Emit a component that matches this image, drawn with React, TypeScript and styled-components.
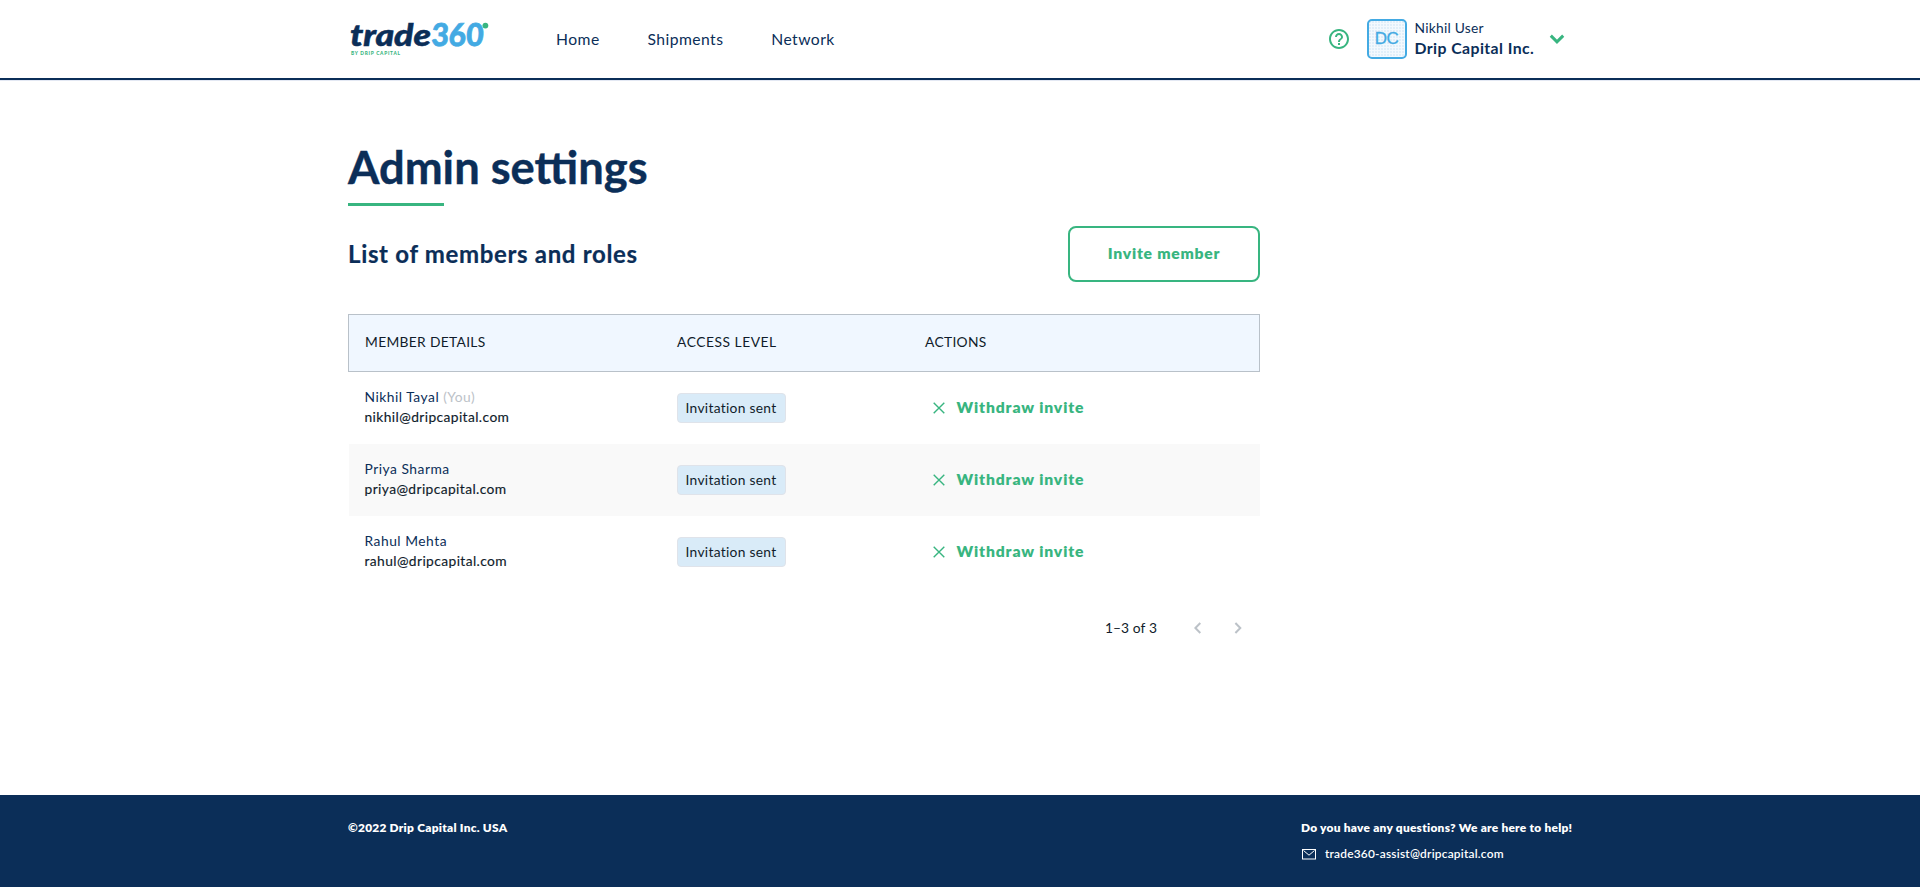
import React from 'react';
import styled, { createGlobalStyle } from 'styled-components';

const navy = '#0b2e58';
const green = '#38b580';
const blue = '#43aae3';
const ink = '#101c2b';
const muted = '#bcc2c8';

const GlobalStyle = createGlobalStyle`
  *, *::before, *::after { box-sizing: border-box; }
  body {
    margin: 0;
    background: #fff;
    color: ${navy};
    font-family: Lato, "Open Sans", sans-serif;
    overflow: hidden;
  }
  h1, h2, p { margin: 0; }
`;

const Page = styled.div`
  display: flex;
  flex-direction: column;
  height: 100vh;
`;

const Header = styled.header`
  flex: none;
  height: 80px;
  border-bottom: 2px solid ${navy};
  box-shadow: 0 1px 0 #e3e8f3;
`;

const Container = styled.div`
  width: 1224px;
  height: 100%;
  margin: 0 auto;
  display: flex;
`;

const HeaderInner = styled(Container)`
  align-items: center;
`;

const Logo = styled.svg`
  display: block;
  width: 144px;
  height: 56px;
  flex: none;
  overflow: visible;
`;

const Nav = styled.nav`
  display: flex;
  gap: 47.8px;
  margin-left: 64px;
`;

const NavLink = styled.a`
  font-size: 15.7px;
  line-height: 24px;
  letter-spacing: 0.45px;
  color: ${navy};
`;

const Account = styled.div`
  display: flex;
  align-items: center;
  margin-left: auto;
  padding-right: 7px;
`;

const HelpIcon = styled.svg`
  display: block;
  width: 24px;
  height: 24px;
  margin-right: 16px;
`;

const Avatar = styled.div`
  width: 40px;
  height: 40px;
  border: 2px solid ${blue};
  border-radius: 5px;
  background-color: #f3f9fe;
  background-image: radial-gradient(circle at 1px 1px, #e0eef9 0.7px, transparent 0.9px);
  background-size: 3px 3px;
  display: flex;
  align-items: center;
  justify-content: center;
  padding: 0 1px 1px 0;
  color: ${blue};
  font: 400 17px/20px "Liberation Sans", Arial, sans-serif;
  letter-spacing: -0.5px;
  -webkit-text-stroke: 0.3px ${blue};
`;

const UserText = styled.div`
  width: 126px;
  margin: 0 0 2px 7.5px;
  white-space: nowrap;
`;

const UserName = styled.div`
  font-size: 13.8px;
  line-height: 20px;
  letter-spacing: 0.24px;
`;

const Company = styled.div`
  font-size: 15.8px;
  font-weight: 700;
  line-height: 20px;
  letter-spacing: 0.42px;
`;

const ChevronDown = styled.svg`
  display: block;
  width: 16px;
  height: 12px;
  margin-left: 8.5px;
`;

const Main = styled.main`
  flex: 1;
  width: 1224px;
  margin: 0 auto;
  padding-top: 48px;
`;

const Content = styled.section`
  width: 912px;
`;

const Title = styled.h1`
  padding-top: 2px;
  font-size: 45.3px;
  font-weight: 700;
  line-height: 73px;
  -webkit-text-stroke: 0.4px ${navy};
  &::after {
    content: '';
    display: block;
    width: 96px;
    height: 3px;
    background: ${green};
  }
`;

const SectionHead = styled.div`
  display: flex;
  align-items: center;
  justify-content: space-between;
  margin-top: 20px;
`;

const SectionTitle = styled.h2`
  font-size: 24px;
  font-weight: 700;
  line-height: 32px;
  letter-spacing: 0.67px;
  -webkit-text-stroke: 0.2px ${navy};
`;

const InviteButton = styled.button`
  width: 192px;
  height: 56px;
  padding: 0 0 2px;
  border: 2px solid ${green};
  border-radius: 8px;
  background: #fff;
  color: ${green};
  font: 800 15.7px/24px Lato, sans-serif;
  letter-spacing: 0.74px;
`;

const TableHead = styled.div`
  display: grid;
  grid-template-columns: 312px 248px 1fr;
  align-items: center;
  height: 58px;
  margin-top: 32px;
  padding: 0 16px 2px;
  border: 1px solid #b9c1c9;
  background: #f0f7ff;
  color: ${ink};
  font-size: 13.8px;
  line-height: 20px;
`;

const HeadCell = styled.span<{ $tracking: number }>`
  letter-spacing: ${(p) => p.$tracking}px;
`;

const TableRow = styled.div`
  display: grid;
  grid-template-columns: 312px 251px 1fr;
  align-items: center;
  height: 72px;
  margin-left: 1px;
  padding: 0 16px;
  &:nth-child(odd) { background: #f9f9f9; }
`;

const Member = styled.div`
  padding-bottom: 2px;
  line-height: 20px;
  margin-left: -0.5px;
`;

const MemberName = styled.div`
  font-size: 13.8px;
  letter-spacing: 0.52px;
`;

const You = styled.span`
  color: ${muted};
  letter-spacing: 0.4px;
`;

const MemberEmail = styled.div`
  color: ${ink};
  font-size: 13.8px;
  letter-spacing: 0.4px;
  -webkit-text-stroke: 0.15px ${ink};
`;

const Badge = styled.span`
  display: inline-flex;
  align-items: center;
  width: 109px;
  height: 30px;
  padding: 0 0 2px 7.5px;
  border: 1px solid #dfe3ea;
  border-radius: 4px;
  background: #d9ebf8;
  color: ${ink};
  font-size: 13.8px;
  letter-spacing: 0.29px;
  white-space: nowrap;
`;

const WithdrawButton = styled.button`
  display: flex;
  align-items: center;
  gap: 11.5px;
  padding: 0 0 0 5px;
  border: 0;
  background: none;
  color: ${green};
  font: 800 15.7px/24px Lato, sans-serif;
  letter-spacing: 0.87px;
`;

const WithdrawText = styled.span`
  padding-bottom: 2px;
`;

const CrossIcon = styled.svg`
  display: block;
  width: 12px;
  height: 12px;
`;

const Pager = styled.div`
  display: flex;
  align-items: center;
  justify-content: flex-end;
  gap: 28px;
  height: 40px;
  margin-top: 20px;
  padding-right: 16px;
  color: ${ink};
  font-size: 13.8px;
`;

const PageCount = styled.span`
  margin-right: 7px;
  padding-bottom: 2px;
  letter-spacing: 0.1px;
`;

const PageArrow = styled.svg`
  display: block;
  width: 12px;
  height: 12px;
  margin-bottom: 1px;
`;

const Footer = styled.footer`
  flex: none;
  height: 92px;
  background: ${navy};
  color: #fff;
  font-size: 11.9px;
  line-height: 16px;
`;

const FooterInner = styled(Container)`
  justify-content: space-between;
  padding-top: 25px;
`;

const FooterStrong = styled.p`
  font-weight: 800;
  letter-spacing: 0.26px;
`;

const Contact = styled.div`
  width: 271px;
  white-space: nowrap;
`;

const MailLine = styled.div`
  display: flex;
  align-items: center;
  gap: 9px;
  margin-top: 10px;
  font-weight: 600;
  letter-spacing: 0.22px;
`;

const MailIcon = styled.svg`
  display: block;
  width: 14px;
  height: 11px;
  margin: 1px 0 0 1px;
`;

const members = [
  { name: 'Nikhil Tayal', email: 'nikhil@dripcapital.com', you: true },
  { name: 'Priya Sharma', email: 'priya@dripcapital.com', you: false },
  { name: 'Rahul Mehta', email: 'rahul@dripcapital.com', you: false },
];

function Trade360Logo() {
  return (
    <Logo viewBox="0 0 144 56">
      <g fontFamily="Lato, sans-serif" fontWeight="900">
        <text x="2" y="35" fontSize="30" fontStyle="italic" fill={navy} stroke={navy} strokeWidth=".5" textLength="81" lengthAdjust="spacingAndGlyphs">trade</text>
        <text transform="translate(83 35.4) skewX(-3)" fontSize="31.5" fill={blue} stroke={blue} strokeWidth=".7" textLength="52" lengthAdjust="spacingAndGlyphs">360</text>
        <text x="3" y="43.8" fontSize="4.8" fill={green} textLength="49" lengthAdjust="spacing">BY DRIP CAPITAL</text>
      </g>
      <circle cx="137.4" cy="14.6" r="2.9" fill={green} />
    </Logo>
  );
}

export default function App() {
  return (
    <Page>
      <GlobalStyle />
      <Header>
        <HeaderInner>
          <Trade360Logo />
          <Nav>
            <NavLink>Home</NavLink>
            <NavLink>Shipments</NavLink>
            <NavLink>Network</NavLink>
          </Nav>
          <Account>
            <HelpIcon viewBox="0 0 24 24" fill={green}>
              <path d="M11 18h2v-2h-2v2zm1-16C6.48 2 2 6.48 2 12s4.48 10 10 10 10-4.48 10-10S17.52 2 12 2zm0 18c-4.41 0-8-3.59-8-8s3.59-8 8-8 8 3.59 8 8-3.59 8-8 8zm0-14c-2.21 0-4 1.79-4 4h2c0-1.1.9-2 2-2s2 .9 2 2c0 2-3 1.75-3 5h2c0-2.25 3-2.5 3-5 0-2.21-1.79-4-4-4z" />
            </HelpIcon>
            <Avatar>DC</Avatar>
            <UserText>
              <UserName>Nikhil User</UserName>
              <Company>Drip Capital Inc.</Company>
            </UserText>
            <ChevronDown viewBox="0 0 16 12" fill="none" stroke={green} strokeWidth="3">
              <path d="M1.8 2.6 8 8.8l6.2-6.2" />
            </ChevronDown>
          </Account>
        </HeaderInner>
      </Header>
      <Main>
        <Content>
          <Title>Admin settings</Title>
          <SectionHead>
            <SectionTitle>List of members and roles</SectionTitle>
            <InviteButton>Invite member</InviteButton>
          </SectionHead>
          <div>
            <TableHead>
              <HeadCell $tracking={0.32}>MEMBER DETAILS</HeadCell>
              <HeadCell $tracking={0.54}>ACCESS LEVEL</HeadCell>
              <HeadCell $tracking={0.32}>ACTIONS</HeadCell>
            </TableHead>
            {members.map((m) => (
              <TableRow key={m.email}>
                <Member>
                  <MemberName>
                    {m.name}
                    {m.you && <You> (You)</You>}
                  </MemberName>
                  <MemberEmail>{m.email}</MemberEmail>
                </Member>
                <div>
                  <Badge>Invitation sent</Badge>
                </div>
                <WithdrawButton>
                  <CrossIcon viewBox="0 0 12 12" stroke={green} strokeWidth="1.4">
                    <path d="M.7.7l10.6 10.6M11.3.7.7 11.3" />
                  </CrossIcon>
                  <WithdrawText>Withdraw invite</WithdrawText>
                </WithdrawButton>
              </TableRow>
            ))}
          </div>
          <Pager>
            <PageCount>1–3 of 3</PageCount>
            <PageArrow viewBox="0 0 12 12" fill="none" stroke={muted} strokeWidth="2">
              <path d="M8.3 1 3.4 6l4.9 5" />
            </PageArrow>
            <PageArrow viewBox="0 0 12 12" fill="none" stroke={muted} strokeWidth="2">
              <path d="M3.4 1l4.9 5-4.9 5" />
            </PageArrow>
          </Pager>
        </Content>
      </Main>
      <Footer>
        <FooterInner>
          <FooterStrong>©2022 Drip Capital Inc. USA</FooterStrong>
          <Contact>
            <FooterStrong>Do you have any questions? We are here to help!</FooterStrong>
            <MailLine>
              <MailIcon viewBox="0 0 14 11" fill="none" stroke="#fff" strokeWidth="1">
                <rect x=".5" y=".5" width="13" height="9.5" />
                <path d="M1.5 1.5 7 6.2l5.5-4.7" />
              </MailIcon>
              trade360-assist@dripcapital.com
            </MailLine>
          </Contact>
        </FooterInner>
      </Footer>
    </Page>
  );
}
